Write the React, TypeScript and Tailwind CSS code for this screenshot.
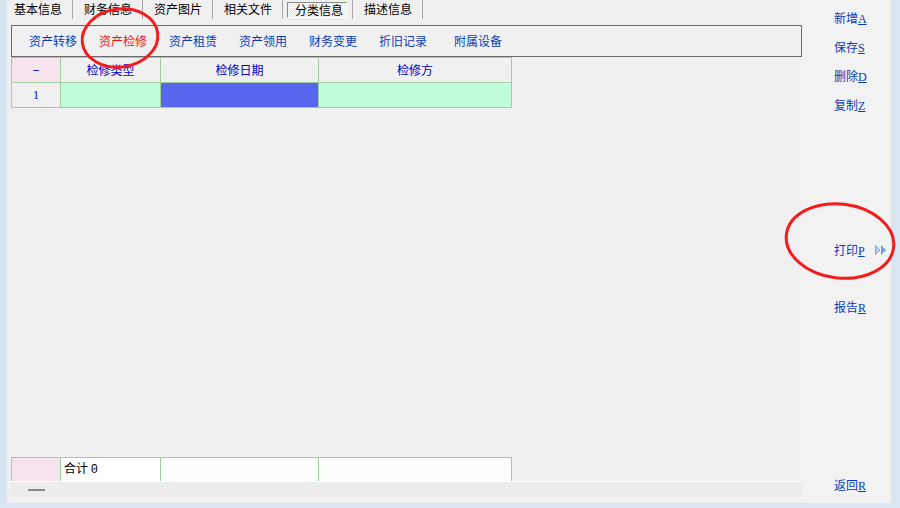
import React from 'react';

const FONT = '"Noto Sans CJK SC", "Liberation Sans", sans-serif';

const topTabs = ['基本信息', '财务信息', '资产图片', '相关文件', '分类信息', '描述信息'];
const subTabs = ['资产转移', '资产检修', '资产租赁', '资产领用', '财务变更', '折旧记录'];

function Key({ label, k }: { label: string; k: string }) {
  return (
    <span className="text-[12px] leading-[16px] text-[#0a3cb8] whitespace-nowrap">
      {label}
      <span className="underline font-['Liberation_Serif'] text-[12px]">{k}</span>
    </span>
  );
}

export default function App() {
  return (
    <div
      className="relative w-[900px] h-[508px] bg-[#d9e5f3] pl-[7px] pr-[9px] pb-[5px] flex overflow-hidden"
      style={{ fontFamily: FONT }}
    >
      {/* left work area */}
      <div className="w-[795px] h-full flex flex-col bg-[#f0f0f0]">
        {/* top tabs */}
        <div className="h-[19px] flex text-[12px] leading-[14px] text-black">
          {topTabs.map((t, i) => {
            if (t === '分类信息') {
              return (
                <div key={t} className="w-[70px] h-[19px] border-r border-[#a8a8a8] pl-[4px] pt-[2px]">
                  <div className="w-[60px] h-[16px] pl-[7px] border-t border-l border-[#8a8a8a] border-r border-b border-r-white border-b-white bg-[repeating-conic-gradient(#ffffff_0_25%,#e6e6e6_0_50%)] bg-[length:2px_2px]">
                    {t}
                  </div>
                </div>
              );
            }
            return (
              <div
                key={t}
                className={`${i === 0 ? 'w-[66px] pl-[7px]' : 'w-[70px] pl-[11px]'} h-[19px] pt-[2px] border-r border-[#a8a8a8]`}
              >
                {t}
              </div>
            );
          })}
        </div>

        {/* sub tabs */}
        <div className="ml-[4px] mt-[6px] w-[791px] h-[32px] border border-[#6b6b6b] flex items-center pl-[17px] gap-[22px] text-[12px] leading-[16px] text-[#0a3cb8]">
          {subTabs.map((t) => (
            <span key={t} className={t === '资产检修' ? 'text-[#f01818]' : ''}>
              {t}
            </span>
          ))}
          <span className="ml-[5px]">附属设备</span>
        </div>

        {/* grid */}
        <div className="ml-[4px] w-[501px] border-l border-t border-[#9fce9f] text-[12px]">
          <div className="flex h-[25px] text-[#0000c8]">
            <div className="w-[49px] border-r border-b border-[#9fce9f] bg-[#f5e4ee] flex items-center justify-center">−</div>
            <div className="w-[100px] border-r border-b border-[#9fce9f] flex items-center justify-center">检修类型</div>
            <div className="w-[158px] border-r border-b border-[#9fce9f] flex items-center justify-center">检修日期</div>
            <div className="w-[193px] border-r border-b border-[#9fce9f] flex items-center justify-center">检修方</div>
          </div>
          <div className="flex h-[25px]">
            <div className="w-[49px] border-r border-b border-[#9fce9f] flex items-center justify-center text-[#0000c0] font-['Liberation_Serif']">1</div>
            <div className="w-[100px] border-r border-b border-[#9fce9f] bg-[#c0fcdc]" />
            <div className="w-[158px] border-r border-b border-[#9fce9f] bg-[#5767ee]" />
            <div className="w-[193px] border-r border-b border-[#9fce9f] bg-[#c0fcdc]" />
          </div>
        </div>

        <div className="flex-1" />

        {/* totals row */}
        <div className="ml-[4px] w-[501px] h-[24px] flex border-l border-t border-[#9fce9f] text-[12px] text-black">
          <div className="w-[49px] border-r border-[#9fce9f] bg-[#f5e4ee]" />
          <div className="w-[100px] border-r border-[#9fce9f] bg-white pl-[3px] pt-[2px] leading-[16px]">
            合计 <span className="font-['Liberation_Mono']">0</span>
          </div>
          <div className="w-[158px] border-r border-[#9fce9f] bg-[#fdfffd]" />
          <div className="w-[193px] border-r border-[#9fce9f] bg-[#fdfffd]" />
        </div>

        {/* scroll strip */}
        <div className="ml-[4px] w-[791px] h-[16px] border-t border-white bg-[#ececec] flex items-center pl-[17px]">
          <div className="w-[17px] h-[2px] bg-[#8a8a8a]" />
        </div>
        <div className="h-[6px]" />
      </div>

      {/* right command panel */}
      <div className="flex-1 h-full bg-[#f2f2f2] pl-[32px] pt-[10px] pb-[10px] flex flex-col text-[12px] leading-[16px]">
        <div className="h-[29px]"><Key label="新增" k="A" /></div>
        <div className="h-[29px]"><Key label="保存" k="S" /></div>
        <div className="h-[29px]"><Key label="删除" k="D" /></div>
        <div className="h-[29px]"><Key label="复制" k="Z" /></div>
        <div className="mt-[116px] h-[16px] flex items-center gap-[10px]">
          <Key label="打印" k="P" />
          <svg width="12" height="10" viewBox="0 0 12 10">
            <polygon points="0.5,0.5 5,5 0.5,9.5" fill="#b9d0f2" stroke="#7aa7e6" strokeWidth="1" />
            <polygon points="6,0 11,5 6,10" fill="#6f9fe4" />
          </svg>
        </div>
        <div className="mt-[41px] h-[16px]"><Key label="报告" k="R" /></div>
        <div className="mt-auto h-[16px]"><Key label="返回" k="R" /></div>
      </div>

      {/* red annotation marks */}
      <svg className="absolute inset-0 pointer-events-none" width="900" height="508">
        <ellipse cx="120" cy="38" rx="38" ry="29" fill="none" stroke="#f21c1c" strokeWidth="3" transform="rotate(-8 120 38)" />
        <ellipse cx="840" cy="241" rx="54" ry="37" fill="none" stroke="#f21c1c" strokeWidth="3" transform="rotate(7 840 241)" />
      </svg>
    </div>
  );
}
